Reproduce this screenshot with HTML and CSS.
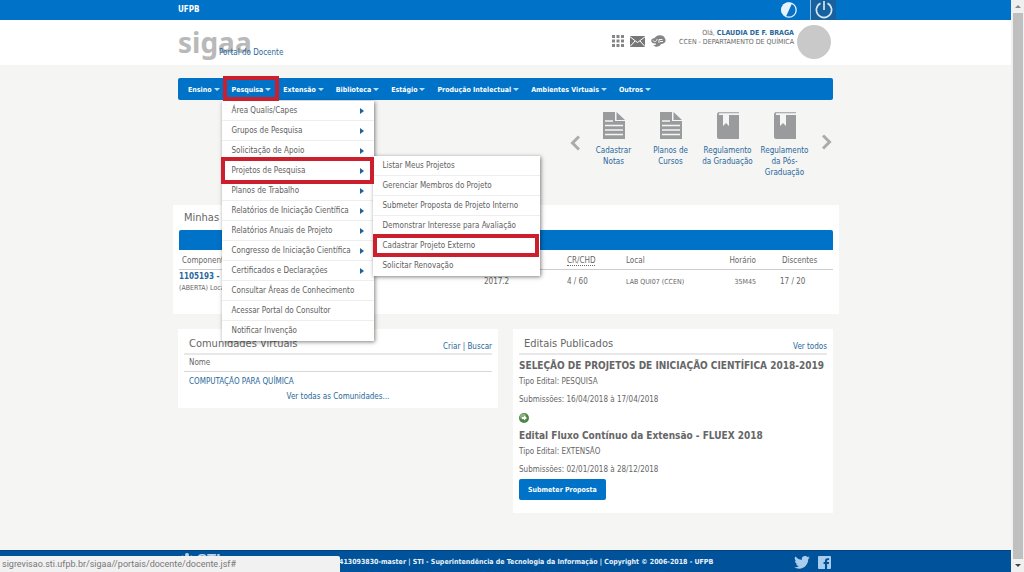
FILE: index.html
```html
<!DOCTYPE html>
<html lang="pt-BR">
<head>
<meta charset="utf-8">
<title>SIGAA - Portal do Docente</title>
<link rel="stylesheet" href="styles.css">
</head>
<body>
<svg class="defs" aria-hidden="true">
  <symbol id="doc" viewBox="0 0 22 27"><path fill="#9a9b9d" d="M0 0h12v9h10v18H0z"/><path fill="#9a9b9d" d="M13.500 0L22 8h-8.500z"/><path stroke="#f5f5f4" stroke-width="1.300" d="M2 9h8M2 13.500h18M2 18h18M2 22.500h18"/></symbol>
  <symbol id="book" viewBox="0 0 22 27"><path fill="#9a9b9d" d="M1 .3h21v.9H2.500C1.500 1.200 1.500 3 2.500 3H6v11l3-3 3 3V3h10v24H2a2 2 0 0 1-2-2V2z"/></symbol>
</svg>
<div class="page">
  <header>
    <div class="topbar">
      <div class="wrap topbar-row">
        <a class="ufpb" href="#">UFPB</a>
        <button class="contrast" aria-label="Contraste"><svg viewBox="0 0 16 16" width="16" height="16"><circle cx="8" cy="8" r="7.200" fill="#0a70c4" stroke="#e4f3fd" stroke-width="1.300"/><path fill="#e4f3fd" d="M11 1.500A7.200 7.200 0 1 0 5 14.500z"/></svg></button>
        <button class="power" aria-label="Sair"><svg viewBox="0 0 18 18" width="18" height="18" fill="none" stroke="#d3e6f3" stroke-width="1.700"><path d="M5.500 2.200a7.600 7.600 0 1 0 7 0M9 0v9"/></svg></button>
      </div>
    </div>
    <div class="brand">
      <div class="wrap brand-row">
        <div class="logo">sigaa<span class="portal">Portal do Docente</span></div>
        <div class="tools">
          <button aria-label="Módulos"><svg viewBox="0 0 12 12" width="12" height="12" fill="#858585"><path d="M0 0h3v3H0zM4.500 0h3v3h-3zM9 0h3v3H9zM0 4.500h3v3H0zM4.500 4.500h3v3h-3zM9 4.500h3v3H9zM0 9h3v3H0zM4.500 9h3v3h-3zM9 9h3v3H9z"/></svg></button>
          <button aria-label="Caixa postal"><svg viewBox="0 0 15 11" width="15" height="11"><path fill="#777" d="M0 0h15v11H0z"/><path fill="none" stroke="#fff" d="M0 .8l7.500 5.700L15 .8M0 10.500L5 5M15 10.500L10 5"/></svg></button>
          <button aria-label="Chamados"><svg viewBox="0 0 15 12" width="15" height="12"><path fill="#858585" d="M5 1.500C8-.5 13 0 14 3.500c2 3-1 5.500-4 5.500-1.500 3.500-6 3.500-8 1 2 .5 3 0 3-1.500C1 9-.5 6.500.5 4.500 1 3.500 3 4 5 1.500z"/><path fill="none" stroke="#fff" stroke-width=".9" d="M2 5.500c1.500 2 4 1 4-1.500M8 8V4.500h3.500M9 6.500h3"/></svg></button>
        </div>
        <div class="user"><p>Olá, <strong>CLAUDIA DE F. BRAGA</strong></p><p>CCEN - DEPARTAMENTO DE QUÍMICA</p></div>
        <div class="avatar"></div>
      </div>
    </div>
  </header>

  <main class="wrap">
    <nav class="nav">
      <div class="item"><a href="#">Ensino</a></div>
      <div class="item marked"><a href="#">Pesquisa</a>
        <ul class="menu">
          <li class="more"><a href="#">Área Qualis/Capes</a></li>
          <li class="more"><a href="#">Grupos de Pesquisa</a></li>
          <li class="more"><a href="#">Solicitação de Apoio</a></li>
          <li class="more marked"><a href="#">Projetos de Pesquisa</a>
            <ul class="menu submenu">
              <li><a href="#">Listar Meus Projetos</a></li>
              <li><a href="#">Gerenciar Membros do Projeto</a></li>
              <li><a href="#">Submeter Proposta de Projeto Interno</a></li>
              <li><a href="#">Demonstrar Interesse para Avaliação</a></li>
              <li class="marked"><a href="#">Cadastrar Projeto Externo</a></li>
              <li><a href="#">Solicitar Renovação</a></li>
            </ul>
          </li>
          <li class="more"><a href="#">Planos de Trabalho</a></li>
          <li class="more"><a href="#">Relatórios de Iniciação Científica</a></li>
          <li class="more"><a href="#">Relatórios Anuais de Projeto</a></li>
          <li class="more"><a href="#">Congresso de Iniciação Científica</a></li>
          <li class="more"><a href="#">Certificados e Declarações</a></li>
          <li><a href="#">Consultar Áreas de Conhecimento</a></li>
          <li><a href="#">Acessar Portal do Consultor</a></li>
          <li><a href="#">Notificar Invenção</a></li>
        </ul>
      </div>
      <div class="item"><a href="#">Extensão</a></div>
      <div class="item"><a href="#">Biblioteca</a></div>
      <div class="item"><a href="#">Estágio</a></div>
      <div class="item"><a href="#">Produção Intelectual</a></div>
      <div class="item"><a href="#">Ambientes Virtuais</a></div>
      <div class="item"><a href="#">Outros</a></div>
    </nav>

    <section class="shortcuts">
      <button class="arrow" aria-label="Anterior"><svg viewBox="0 0 10 16" width="10" height="16" fill="none" stroke="#aaabad" stroke-width="3"><path d="M9 1.500L2.500 8 9 14.500"/></svg></button>
      <a href="#"><svg><use href="#doc"/></svg>Cadastrar Notas</a>
      <a href="#"><svg><use href="#doc"/></svg>Planos de Cursos</a>
      <a href="#"><svg><use href="#book"/></svg>Regulamento da Graduação</a>
      <a href="#"><svg><use href="#book"/></svg>Regulamento da Pós-Graduação</a>
      <button class="arrow next" aria-label="Próximo"><svg viewBox="0 0 10 16" width="10" height="16" fill="none" stroke="#aaabad" stroke-width="3"><path d="M1 1.500L7.500 8 1 14.500"/></svg></button>
    </section>

    <section class="card classes">
      <h2>Minhas Turmas</h2>
      <div class="bar"></div>
      <table>
        <thead><tr><th class="c-name">Componente</th><th class="c-year"></th><th class="c-cr"><abbr>CR/CHD</abbr></th><th class="c-place">Local</th><th class="c-time">Horário</th><th class="c-count">Discentes</th></tr></thead>
        <tbody><tr><td><a class="code" href="#">1105193 -</a><small>(ABERTA) Local</small></td><td>2017.2</td><td>4 / 60</td><td class="tiny">LAB QUI07 (CCEN)</td><td class="tiny c-hour">35M45</td><td class="c-total">17 / 20</td></tr></tbody>
      </table>
    </section>

    <div class="columns">
      <section class="card communities">
        <div class="card-head"><h2>Comunidades Virtuais</h2><span class="links"><a href="#">Criar</a> | <a href="#">Buscar</a></span></div>
        <p class="name">Nome</p>
        <a class="community" href="#">COMPUTAÇÃO PARA QUÍMICA</a>
        <a class="all" href="#">Ver todas as Comunidades...</a>
      </section>
      <section class="card notices">
        <div class="card-head"><h2>Editais Publicados</h2><a href="#">Ver todos</a></div>
        <h3>SELEÇÃO DE PROJETOS DE INICIAÇÃO CIENTÍFICA 2018-2019</h3>
        <p>Tipo Edital: PESQUISA</p>
        <p>Submissões: 16/04/2018 à 17/04/2018</p>
        <button class="go" aria-label="Ver edital"><svg viewBox="0 0 10 10" width="10" height="10"><circle cx="5" cy="5" r="5" fill="#4d8545"/><circle cx="4" cy="3.500" r="3" fill="#8ab383"/><path fill="#fff" d="M3 4h2V2.500L8 5 5 7.500V6H3z"/></svg></button>
        <h3>Edital Fluxo Contínuo da Extensão - FLUEX 2018</h3>
        <p>Tipo Edital: EXTENSÃO</p>
        <p>Submissões: 02/01/2018 à 28/12/2018</p>
        <button class="submit">Submeter Proposta</button>
      </section>
    </div>
  </main>

  <footer>
    <div class="wrap footer-row">
      <div class="sti"><svg viewBox="0 0 14 14" width="14" height="14" fill="#bcd6ec"><circle cx="7" cy="3" r="2"/><circle cx="2.500" cy="5" r="1.500"/><circle cx="11.500" cy="5" r="1.500"/><path d="M3 14V8l4-2 4 2v6z"/></svg>STI</div>
      <p>413093830-master | STI - Superintendência de Tecnologia da Informação | Copyright © 2006-2018 - UFPB</p>
      <div class="social">
        <a href="#" aria-label="Twitter"><svg viewBox="0 0 24 20" width="16" height="13" fill="#a9cdec"><path d="M24 2.400a10 10 0 0 1-2.800.8A5 5 0 0 0 23.300.400a10 10 0 0 1-3.100 1.200A4.900 4.900 0 0 0 11.800 6 14 14 0 0 1 1.700.900a4.900 4.900 0 0 0 1.500 6.600A5 5 0 0 1 1 6.900a4.900 4.900 0 0 0 3.900 4.900 5 5 0 0 1-2.200.1 4.900 4.900 0 0 0 4.600 3.400A9.900 9.900 0 0 1 0 17.300 14 14 0 0 0 7.500 19.500c9.100 0 14.300-7.700 14-14.600A10 10 0 0 0 24 2.400z"/></svg></a>
        <a href="#" aria-label="Facebook"><svg viewBox="0 0 14 14" width="13" height="13"><rect width="14" height="14" rx="1" fill="#a9cdec"/><path fill="#00539b" d="M7.500 14V8.500H6v-2h1.500V5c0-1.800 1-2.700 2.700-2.700H12v2h-1.200c-.7 0-1 .3-1 1v1.200H12l-.3 2H9.800V14z"/></svg></a>
      </div>
    </div>
  </footer>
</div>
<div class="scrollbar" aria-hidden="true"><i class="up"></i><i class="thumb"></i><i class="down"></i></div>
<div class="status">sigrevisao.sti.ufpb.br/sigaa//portais/docente/docente.jsf#</div>
</body>
</html>
```
FILE: styles.css
```css
* { box-sizing: border-box; }
body, p, h2, h3, ul { margin: 0; padding: 0; }
body {
  display: flex;
  min-height: 100vh;
  background: #f5f5f4;
  color: #666;
  font: 8px/12px "DejaVu Sans Condensed", "DejaVu Sans", sans-serif;
}
a { color: #28689b; text-decoration: none; }
button { border: 0; padding: 0; background: none; font: inherit; }
svg { display: block; }
.defs { position: absolute; width: 0; height: 0; }
.page { flex: 1; display: flex; flex-direction: column; min-width: 0; }
.wrap { width: 100%; max-width: 655px; margin: 0 auto; }

.topbar { background: #0072c8; }
.topbar-row { display: flex; align-items: center; height: 20px; }
.ufpb { flex: 1; color: #fff; font-weight: bold; }
.contrast { margin-right: 13px; }
.power { display: flex; justify-content: center; align-items: center; width: 26px; height: 20px; margin-right: -3px; background: #17619f; border-left: 1px solid #8fc0e4; }

.brand { background: #fff; }
.brand-row { display: flex; align-items: flex-start; height: 45px; padding-top: 5px; }
.logo { position: relative; flex: 1; color: #b9b9b9; font: bold 28px/34px "Noto Sans", sans-serif; }
.portal { position: absolute; left: 41px; top: 22px; color: #28689b; font: 8px/12px "DejaVu Sans Condensed", sans-serif; }
.tools { display: flex; align-items: center; gap: 6px; height: 32px; margin-right: 6px; }
.user { min-width: 122px; padding-top: 4px; text-align: right; font-size: 7px; line-height: 9px; }
.user strong { color: #28689b; }
.avatar { width: 34px; height: 34px; margin: 0 2px 0 3px; border-radius: 50%; background: #c9c9c9; }

.nav { display: flex; gap: 12px; height: 22px; margin-top: 13px; padding: 0 10px; border-radius: 2px; background: #0072c8; font-size: 7px; }
.item { position: relative; }
.item > a { display: flex; align-items: center; gap: 2px; height: 23px; color: #fff; font-weight: bold; }
.item > a::after { content: ""; border: 3px solid transparent; border-top-color: #b9e3fb; border-bottom: 0; }
.marked::before { content: ""; position: absolute; z-index: 3; inset: -4px 0 -4px -1px; border: 4px solid #cc1f2d; pointer-events: none; }
.item.marked::before { inset: -2px -8px -1px -9px; }
.menu { position: absolute; z-index: 2; top: 23px; left: -10px; width: 152px; list-style: none; background: #fff; box-shadow: 1px 1px 4px rgba(0, 0, 0, .5); font-size: 8px; }
.menu li { position: relative; height: 20px; border-bottom: 1px solid #eee; }
.menu li:last-child { border-bottom: 0; }
.menu a { display: block; padding: 0 10px; line-height: 20px; color: #606060; white-space: nowrap; }
.more::after { content: ""; position: absolute; right: 10px; top: 7px; border: 3px solid transparent; border-left: 4px solid #1c639c; border-right: 0; }
.menu .submenu { top: -5px; left: 151px; width: 167px; }
.submenu .marked::before { inset: -2px 1px -2px 0; }

.shortcuts { display: flex; align-items: flex-start; justify-content: flex-end; height: 105px; padding-top: 12px; color: #28689b; text-align: center; line-height: 11px; }
.shortcuts a { width: 57px; }
.shortcuts a svg { width: 22px; height: 27px; margin: 0 auto 6px; }
.shortcuts .arrow { margin: 23px 5px 0; }
.shortcuts .next { margin: 22px 1px 0 9px; }

.card { background: #fff; }
.card h2 { font-size: 11px; font-weight: normal; line-height: 14px; }
.classes { margin: 0 -6px 0 -5px; padding: 6px 6px 20px; height: 109px; }
.classes h2 { padding-left: 5px; }
.bar { height: 20px; margin-top: 5px; border-radius: 2px 2px 0 0; background: #0072c8; }
table { width: 100%; border-collapse: collapse; table-layout: fixed; }
th, td { padding: 0; font-weight: normal; text-align: left; white-space: nowrap; }
th { height: 19px; padding-top: 3px; border-bottom: 1px solid #ccc; }
td { height: 25px; }
.c-name { width: 305px; padding-left: 3px; }
.c-year { width: 83px; }
.c-cr { width: 59px; }
.c-place { width: 90px; }
.c-time { width: 40px; text-align: right; }
.c-hour { text-align: right; }
.c-count { padding-left: 26px; }
.c-total { padding-left: 24px; }
abbr { border-bottom: 1px dotted #666; }
.code { display: block; font-weight: bold; line-height: 12px; }
small, .tiny { font-size: 7px; line-height: 10px; }
small { display: block; }

.columns { display: grid; grid-template-columns: 1fr 1fr; align-items: start; gap: 15px; margin-top: 15px; }
.communities { height: 79px; padding: 8px 6px; }
.card-head { display: flex; justify-content: space-between; align-items: flex-end; height: 18px; padding-left: 5px; border-bottom: 2px solid #e8e8e8; }
.card-head h2 { align-self: flex-start; }
.links { color: #28689b; }
.name { padding: 2px 5px; height: 17px; border-bottom: 1px solid #d8d8d8; }
.community { display: block; margin-top: 3px; padding-left: 5px; line-height: 14px; }
.all { display: block; text-align: center; line-height: 15px; }
.notices { padding: 8px 6px 13px; }
.notices h3 { padding-top: 4px; font-size: 10px; line-height: 14px; }
.notices p { line-height: 18px; }
.go { display: block; margin: 4px 0 2px; }
.submit { height: 21px; padding: 0 9px; border-radius: 2px; background: #0072c8; color: #fff; font-size: 7px; font-weight: bold; }

footer { margin-top: auto; height: 22px; overflow: hidden; background: #00539b; color: #e8f2fa; border-top: 1px solid #00457f; }
.footer-row { display: flex; align-items: center; height: 22px; }
.footer-row p { flex: 1; font-size: 7px; font-weight: bold; white-space: nowrap; }
.sti { display: flex; align-items: center; align-self: flex-start; gap: 3px; width: 161px; padding-left: 2px; font: bold 15px/16px "Liberation Sans", sans-serif; color: #bcd6ec; }
.social { display: flex; align-items: center; gap: 8px; padding-right: 2px; }

.scrollbar { display: flex; flex-direction: column; justify-content: space-between; align-items: center; width: 13px; padding: 5px 0; background: #f0f0f0; }
.thumb { flex: 1; width: 10px; margin: 5px 0; background: #bfbfbf; }
.up, .down { border: 3px solid transparent; }
.up { border-top: 0; border-bottom-color: #888; }
.down { border-bottom: 0; border-top-color: #444; }
.status { position: fixed; z-index: 5; left: 0; bottom: 0; width: 340px; height: 16px; padding-left: 2px; border-radius: 0 2px 0 0; background: #f1f1f1; color: #777; font: 9px/16px Roboto, sans-serif; }
```
